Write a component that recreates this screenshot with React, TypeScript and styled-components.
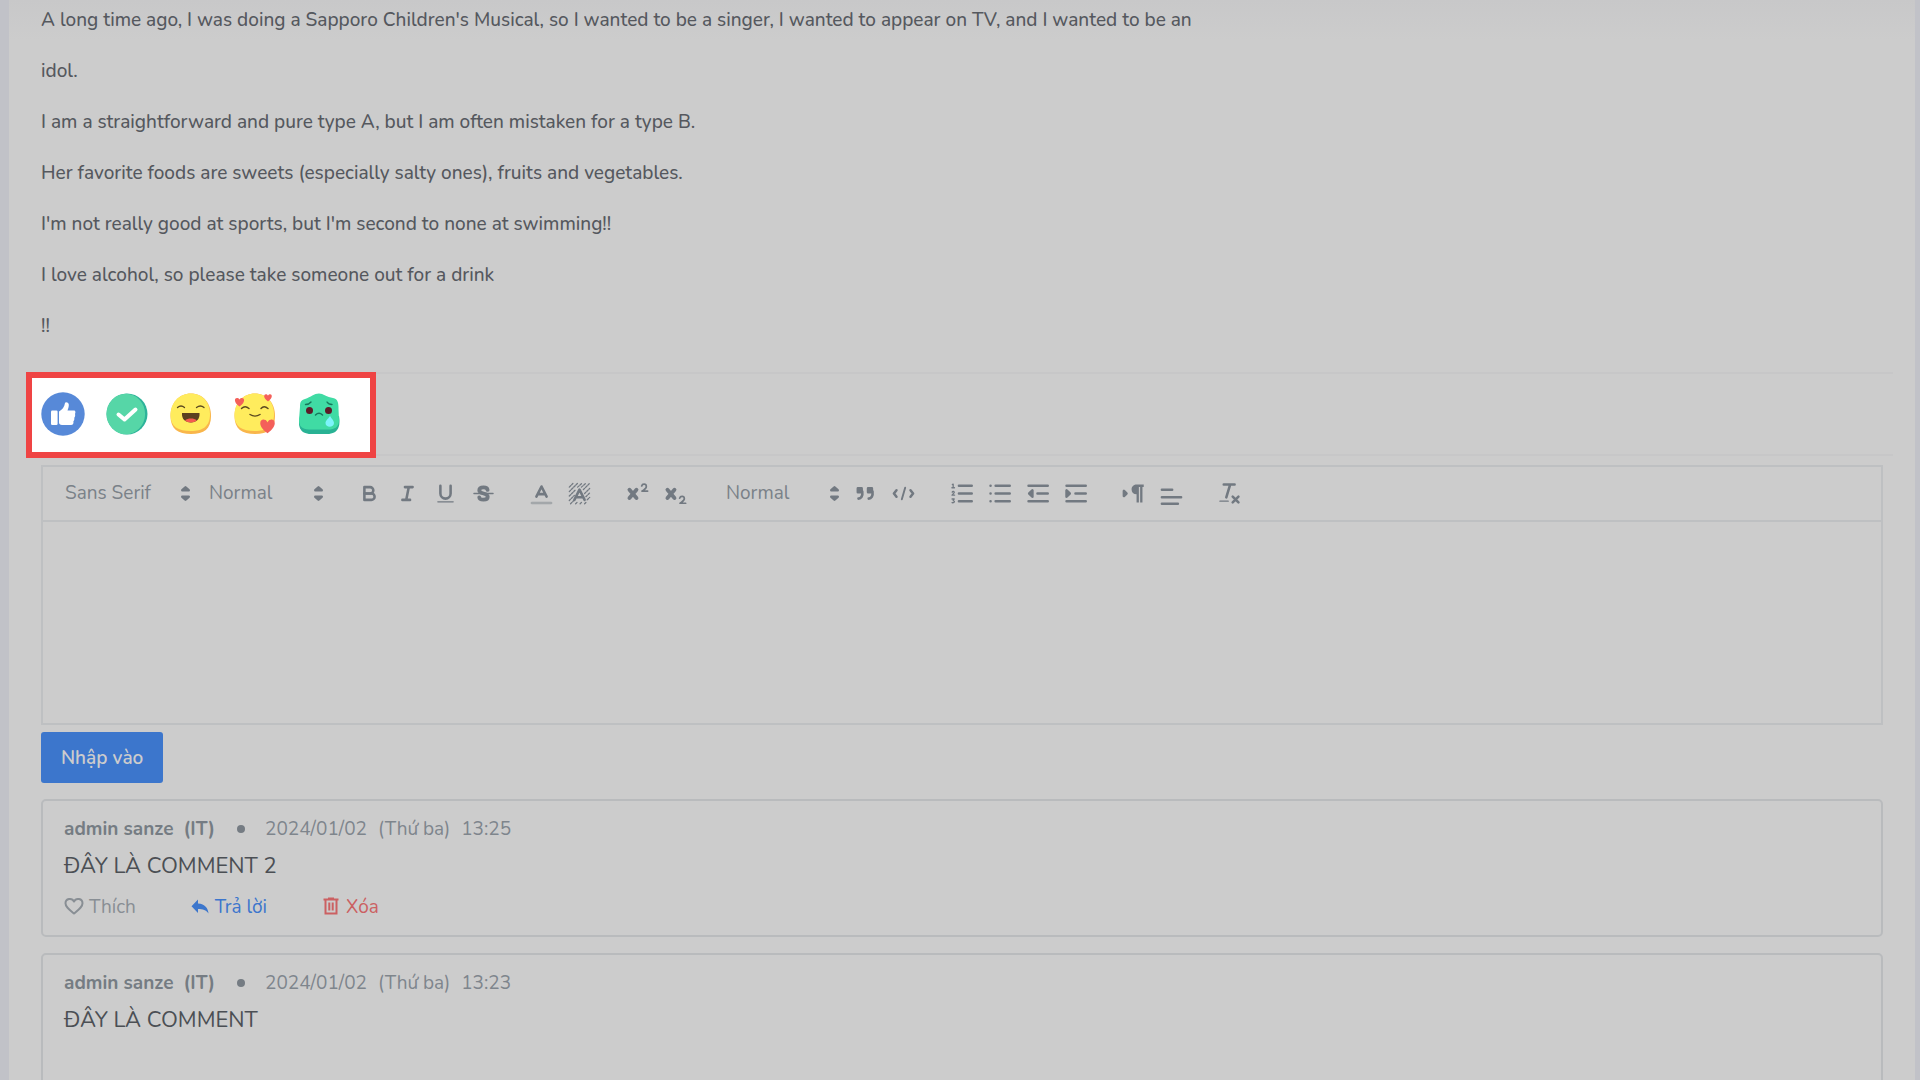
import React from "react";
import styled, { createGlobalStyle, css } from "styled-components";

const font = `Nunito, Lato, "Noto Sans", sans-serif`;

const GlobalStyle = createGlobalStyle`
  *, *::before, *::after { box-sizing: border-box; }
  body { margin: 0; background: #c1c2c8; font-family: ${font}; color: #55585e; }
  button, select, textarea { font-family: inherit; }
`;

const Page = styled.div`
  height: 100vh;
  overflow: hidden;
  padding: 0 5px 0 9px;
`;

const Panel = styled.main`
  display: flex;
  flex-direction: column;
  min-height: 100vh;
  padding: 8px 32px 0;
  background: linear-gradient(#c8c8c9, #cccccc 40px);
`;

const Article = styled.article`
  display: flex;
  flex-direction: column;
  gap: 27px;
  margin-bottom: 34px;
`;

const Paragraph = styled.p`
  margin: 0;
  font-size: 19px;
  font-weight: 500;
  line-height: 24px;
`;

const ReactionSection = styled.section`
  margin: 0 -10px 9px -15px;
  border-top: 2px solid #c7c7c8;
  border-bottom: 2px solid #c7c7c8;
`;

const ReactionBox = styled.div`
  display: flex;
  align-items: center;
  gap: 20px;
  width: 350px;
  height: 86px;
  margin: -2px 0 -4px;
  padding: 0 9px 2px;
  border: 6px solid #ef4444;
  background: #ffffff;
`;

const ReactionButton = styled.button`
  width: 44px;
  height: 44px;
  padding: 0;
  border: 0;
  background: none;
  svg { display: block; width: 44px; height: 44px; }
`;

const Editor = styled.section`
  border: 2px solid #bec0c2;
`;

const Toolbar = styled.div`
  display: flex;
  align-items: center;
  gap: 20px;
  height: 55px;
  padding: 0 10px;
  border-bottom: 2px solid #bec0c2;
  color: #727981;
`;

const Group = styled.div`
  display: flex;
  align-items: center;
`;

const Picker = styled.label<{ $width: number }>`
  display: flex;
  align-items: center;
  width: ${(p) => p.$width}px;
  margin-left: 7px;
  svg { flex: none; width: 23px; height: 23px; }
`;

const PickerSelect = styled.select`
  flex: 1;
  min-width: 0;
  height: 28px;
  padding: 0 0 2px 5px;
  border: 0;
  appearance: none;
  background: transparent;
  color: #7a8188;
  font-size: 19px;
`;

const ToolButton = styled.button`
  display: flex;
  justify-content: center;
  width: 38px;
  padding: 0;
  border: 0;
  background: none;
  color: inherit;
  svg { display: block; width: 23px; height: 23px; }
`;

const TextArea = styled.textarea`
  display: block;
  width: 100%;
  height: 201px;
  padding: 16px 20px;
  border: 0;
  outline: 0;
  resize: none;
  background: transparent;
  color: #55585e;
  font-size: 19px;
`;

const SubmitButton = styled.button`
  align-self: flex-start;
  height: 51px;
  margin: 7px 0 16px;
  padding: 0 20px;
  border: 0;
  border-radius: 3px;
  background: #3c76cc;
  color: #cccccc;
  font-size: 19px;
  font-weight: 600;
`;

const CommentList = styled.section`
  display: flex;
  flex-direction: column;
  gap: 16px;
`;

const Comment = styled.article`
  display: flex;
  flex-direction: column;
  flex: none;
  height: 138px;
  padding: 15px 21px 0;
  border: 2px solid #b9bbbd;
  border-radius: 5px;
`;

const CommentHeader = styled.header`
  display: flex;
  align-items: center;
  gap: 11px;
  color: #7e858c;
  font-size: 19px;
  line-height: 26px;
`;

const Author = styled.strong`
  display: flex;
  gap: 10px;
  color: #757c83;
`;

const Dot = styled.span`
  width: 8px;
  height: 8px;
  margin: 0 9px 0 11px;
  border-radius: 50%;
  background: #757c83;
`;

const CommentBody = styled.p`
  margin: 10px 0 14px;
  font-size: 22px;
  line-height: 28px;
  color: #4b4f54;
`;

const Actions = styled.div`
  display: flex;
  gap: 54px;
`;

const Action = styled.button<{ $color: string }>`
  display: flex;
  align-items: center;
  gap: 5px;
  padding: 0;
  border: 0;
  background: none;
  color: ${(p) => p.$color};
  font-size: 19px;
  line-height: 26px;
  svg { width: 20px; height: 20px; }
`;

const paragraphs = [
  "A long time ago, I was doing a Sapporo Children's Musical, so I wanted to be a singer, I wanted to appear on TV, and I wanted to be an",
  "idol.",
  "I am a straightforward and pure type A, but I am often mistaken for a type B.",
  "Her favorite foods are sweets (especially salty ones), fruits and vegetables.",
  "I'm not really good at sports, but I'm second to none at swimming!!",
  "I love alcohol, so please take someone out for a drink",
  "!!",
];

const heart = "M0 6 C-9 -1 -6 -7 -2.6 -6 C-1 -6 0 -4 0 -3.5 C0 -4 1 -6 2.6 -6 C6 -7 9 -1 0 6Z";
const faceBlob = "M22 1.5 C34 1.5 42 11 42 24 C42 37 35 42 22 42 C9 42 1.5 37 1.5 24 C1.5 11 10 1.5 22 1.5Z";
const faceFront = "M22 1.5 C33 1.5 41 10 41 22 C41 35 33 39 22 39 C9 39 1.5 35 1.5 23 C1.5 11 10 1.5 22 1.5Z";

const reactions = [
  {
    label: "Like",
    art: (
      <>
        <circle cx="22" cy="22" r="21.7" fill="#5789d8" />
        <rect x="10" y="18.5" width="6.6" height="14.5" rx="1.2" fill="#fff" />
        <path fill="#fff" d="M18 19.5 C21 18 23.5 15 24 11 C24.2 9.5 27.5 10 27.8 12.5 C28 14.5 27 17 26.5 18.5 H33 C34.8 18.5 34.6 21 34 22 C34.5 23.5 34 25 33.3 25.7 C33.6 27.5 33 28.7 32.4 29.3 C32.8 31.5 32 33 30 33 H21 C19 33 18 32 18 30.5Z" />
      </>
    ),
  },
  {
    label: "Done",
    art: (
      <>
        <circle cx="22" cy="22" r="20.5" fill="#2db39a" />
        <ellipse cx="20.8" cy="22" rx="19.3" ry="20.3" fill="#56d6a7" />
        <path d="M13.5 22.5 L19.5 27.5 L30.5 17.5" fill="none" stroke="#fff" strokeWidth="4" strokeLinecap="round" strokeLinejoin="round" />
      </>
    ),
  },
  {
    label: "Haha",
    art: (
      <>
        <path fill="#f9b64b" d={faceBlob} />
        <path fill="#ffec5d" d={faceFront} />
        <path d="M8.5 15.5 Q12 12.5 15.5 15.5 M27.5 15.5 Q31.5 12.5 35 15.5" fill="none" stroke="#5b481f" strokeWidth="1.3" strokeLinecap="round" />
        <path fill="#5b411f" d="M13 21 H30.5 C31 27 27.5 30.5 22 30.5 C16 30.5 12.6 27 13 21Z" />
        <path fill="#f45b4f" d="M16 28.3 C19 26 25 26 27.7 28.3 C25 31.3 18.5 31.3 16 28.3Z" />
      </>
    ),
  },
  {
    label: "Love",
    art: (
      <>
        <path fill="#f9b64b" d={faceBlob} />
        <path fill="#ffec5d" d={faceFront} />
        <path d="M8.5 16.5 Q12 13 16 16.5 M28 16.5 Q31 13 35 16.5 M17 22.5 Q22 25.7 27 22.5" fill="none" stroke="#5b481f" strokeWidth="1.4" strokeLinecap="round" />
        <g fill="#f4605a">
          <path transform="translate(6.5 10.3) scale(.77 .72)" d={heart} />
          <path transform="translate(35 5.8) scale(.64 .6)" d={heart} />
          <path transform="translate(34.5 34.5) scale(1.22 1.13)" d={heart} />
        </g>
      </>
    ),
  },
  {
    label: "Sad",
    art: (
      <>
        <path fill="#29b294" d="M3 24 L42 24 C43.5 33 42 42 30 42 H14 C2 42 .5 33 3 24Z" />
        <path fill="#40dba4" d="M22 1.5 C26 1.5 30 5 36 6 C41 7 41.5 11 41.5 17 L42 28 C42 35 38 37.5 31 37.5 H12 C5 37.5 2 34 2 28 L3 15 C3 10 4 8 8 7 C14 5 17 1.5 22 1.5Z" />
        <path d="M8.5 12.5 Q12 12.5 14 10 M30 10 Q31.5 12.5 35 12.5" fill="none" stroke="#15795c" strokeWidth="1.4" strokeLinecap="round" />
        <circle cx="12.5" cy="18.6" r="3.5" fill="#5d1b28" />
        <circle cx="31.5" cy="18.6" r="3.5" fill="#5d1b28" />
        <path d="M18.5 23 Q22 19.5 25.5 23" fill="none" stroke="#15795c" strokeWidth="1.5" strokeLinecap="round" />
        <path fill="#7df4fb" d="M33 23.5 C33.5 26 37 28 37 31 C37 36 28.5 36 28.5 31 C28.5 28 32.5 26 33 23.5Z" />
      </>
    ),
  },
];

const stroke = css`
  fill: none;
  stroke: currentColor;
  stroke-width: 2;
  stroke-linecap: round;
  stroke-linejoin: round;
`;

const ToolSvg = styled.svg`
  ${stroke}
  .thin { stroke-width: 1; }
  .fill { fill: currentColor; stroke: none; }
  .both { fill: currentColor; }
`;

const Icon = ({ children }: { children: React.ReactNode }) => (
  <ToolSvg viewBox="0 0 18 18" aria-hidden="true">{children}</ToolSvg>
);

const smallTwo =
  "M15.5 7H13.86a3.58 3.58 0 0 0 1.2-1.32A2.07 2.07 0 0 0 15.24 4.7 1.77 1.77 0 0 0 13.5 3a1.95 1.95 0 0 0-1.93 1.39.5.5 0 0 0 .3.61.6.6 0 0 0 .65-.24A.94.94 0 0 1 13.44 4a.75.75 0 0 1 .8.77c0 .7-.9 1.3-2.37 2.42A.5.5 0 0 0 12.1 8h3.4a.5.5 0 0 0 0-1Z";

type Tool = { label: string; icon: React.ReactNode };

const textTools: Tool[] = [
  { label: "Bold", icon: <><path d="M5 4H9.5A2.5 2.5 0 0 1 12 6.5 2.5 2.5 0 0 1 9.5 9H5Z" /><path d="M5 9H10.5A2.5 2.5 0 0 1 13 11.5 2.5 2.5 0 0 1 10.5 14H5Z" /></> },
  { label: "Italic", icon: <path d="M7 4H13M5 14H11M8 14L10 4" /> },
  { label: "Underline", icon: <><path d="M5 3V9A4 4 0 0 0 9 13 4 4 0 0 0 13 9V3" /><path className="thin" d="M3 15.5H15" /></> },
  { label: "Strike", icon: <><path d="M12.2 6.2C12 4.7 10.8 4.2 9 4.2 7 4.2 5.7 5 5.7 6.5 5.7 9.8 12.3 8.2 12.3 11.5 12.3 13.3 11 13.8 9 13.8 7 13.8 5.8 13.3 5.7 12" strokeWidth="3" /><path className="thin" d="M1.5 9H16.5" /></> },
];

const colorTools: Tool[] = [
  { label: "Text colour", icon: <><path opacity=".45" d="M1.5 16.5H16.5" /><path d="M5 11.5L9 3.5L13 11.5M6.5 9.5H11.5" /></> },
  { label: "Background colour", icon: <><path className="thin" strokeDasharray="1.5 1" d="M1 4L4 1M1 7.5L7.5 1M1 11L5.5 6.5M7.5 4L11 1M1 14.5L5 10.5M2 17L4.5 14.5M10.5 4L14 1M12 6L17 1M13 9L17 5M14 11.5L17 8.5M15 14L17 12M6 17L7.5 15.5M9.5 17L11 15.5M13 17L14 16" /><path d="M5 14L9 6L13 14M6.5 12H11.5" /></> },
];

const scriptTools: Tool[] = [
  { label: "Superscript", icon: <><path className="fill" d={smallTwo} transform="translate(-4 -3) scale(1.35)" /><path strokeWidth="3" d="M2.7 6L8.2 12.5M8.2 6L2.7 12.5" /></> },
  { label: "Subscript", icon: <><path className="fill" d={smallTwo} transform="translate(-4 6.5) scale(1.35)" /><path strokeWidth="3" d="M2.7 6L8.2 12.5M8.2 6L2.7 12.5" /></> },
];

const blockTools: Tool[] = [
  { label: "Quote", icon: <><rect className="both" x="3" y="5" width="3" height="3" /><rect className="both" x="11" y="5" width="3" height="3" /><path d="M6.5 7.5C7 11 5.5 13 3.5 13M14.5 7.5C15 11 13.5 13 11.5 13" /></> },
  { label: "Code", icon: <><path d="M3.5 6.5L1.5 9L3.5 11.5M14.5 6.5L16.5 9L14.5 11.5" /><path d="M10.3 4.5L7.7 13.5" strokeWidth="1.5" /></> },
];

const listTools: Tool[] = [
  { label: "Ordered list", icon: <><path d="M7 3H17M7 9H17M7 15H17" /><path className="thin" d="M2.5 4.5V1.6L1.8 2M1.5 4.5H3.5M1.7 8C2 7 3.5 7.2 3.3 8.3L1.6 10.3H3.6M1.6 13.3H3.3L2.5 14.6C4 14.7 3.8 16.5 1.6 16.2" /></> },
  { label: "Bullet list", icon: <path d="M6 3H17M6 9H17M6 15H17M2 3V3M2 9V9M2 15V15" /> },
  { label: "Decrease indent", icon: <><path d="M2 3H17M2 15H17M9 9H17" /><path className="both" d="M5 6.5V11.5L2.5 9Z" /></> },
  { label: "Increase indent", icon: <><path d="M2 3H17M2 15H17M9 9H17" /><path className="both" d="M2 6.5V11.5L4.5 9Z" /></> },
];

const alignTools: Tool[] = [
  { label: "Text direction", icon: <><path className="both" d="M1.5 7V11L3.5 9Z" /><path className="fill" d="M11.5 2H17V4H16V16H14.2V4H13.2V16H11.4V9.5C9 9.5 7.5 8 7.5 5.8 7.5 3.500 9.5 2 11.5 2Z" /></> },
  { label: "Align", icon: <path d="M1.500 6H9.500M1.500 12H16.500M1.500 17H14" /> },
];

const clearTools: Tool[] = [
  { label: "Clear formatting", icon: <><path d="M4.5 2H13M9.500 2L6.500 12M11.500 11.500L16 16M16 11.500L11.500 16" /><path className="thin" d="M1.5 15H8" /></> },
];

const Tools = ({ tools }: { tools: Tool[] }) => (
  <>
    {tools.map((t) => (
      <ToolButton key={t.label} type="button" aria-label={t.label}><Icon>{t.icon}</Icon></ToolButton>
    ))}
  </>
);

const Dropdown = ({ label, value, width }: { label: string; value: string; width: number }) => (
  <Picker $width={width}>
    <PickerSelect aria-label={label} defaultValue={value}><option>{value}</option></PickerSelect>
    <Icon>
      <path className="both" d="M6.5 6.5L9 4.2L11.5 6.5ZM6.5 11.5L9 13.8L11.5 11.5Z" />
    </Icon>
  </Picker>
);

const comments = [
  { time: "13:25", text: "ĐÂY LÀ COMMENT 2", actions: true },
  { time: "13:23", text: "ĐÂY LÀ COMMENT", actions: false },
];

export default function App() {
  return (
    <>
      <GlobalStyle />
      <Page>
        <Panel>
          <Article>
            {paragraphs.map((p) => <Paragraph key={p}>{p}</Paragraph>)}
          </Article>
          <ReactionSection>
            <ReactionBox>
              {reactions.map((r) => (
                <ReactionButton key={r.label} type="button" aria-label={r.label}>
                  <svg viewBox="0 0 44 44" aria-hidden="true">{r.art}</svg>
                </ReactionButton>
              ))}
            </ReactionBox>
          </ReactionSection>
          <Editor>
            <Toolbar>
              <Group>
                <Dropdown label="Font" value="Sans Serif" width={137} />
                <Dropdown label="Size" value="Normal" width={126} />
              </Group>
              <Group><Tools tools={textTools} /></Group>
              <Group><Tools tools={colorTools} /></Group>
              <Group><Tools tools={scriptTools} /></Group>
              <Group>
                <Dropdown label="Heading" value="Normal" width={125} />
                <Tools tools={blockTools} />
              </Group>
              <Group><Tools tools={listTools} /></Group>
              <Group><Tools tools={alignTools} /></Group>
              <Group><Tools tools={clearTools} /></Group>
            </Toolbar>
            <TextArea aria-label="Comment" />
          </Editor>
          <SubmitButton type="button">Nhập vào</SubmitButton>
          <CommentList>
            {comments.map((c) => (
              <Comment key={c.time}>
                <CommentHeader>
                  <Author><span>admin sanze</span><span>(IT)</span></Author>
                  <Dot />
                  <span>2024/01/02</span>
                  <span>(Thứ ba)</span>
                  <span>{c.time}</span>
                </CommentHeader>
                <CommentBody>{c.text}</CommentBody>
                {c.actions && (
                  <Actions>
                    <Action type="button" $color="#888e94">
                      <svg viewBox="0 0 20 20" fill="none" stroke="currentColor" strokeWidth="2" strokeLinejoin="round" aria-hidden="true">
                        <path d="M10 16.5C5 12.5 1.5 10 1.5 6.2 1.5 1.5 8 .5 10 4.5 12 .5 18.5 1.5 18.5 6.2 18.5 10 15 12.5 10 16.5Z" />
                      </svg>
                      Thích
                    </Action>
                    <Action type="button" $color="#3c76cc">
                      <svg viewBox="0 0 20 20" fill="currentColor" aria-hidden="true">
                        <path d="M8 2.5V6.5C15 7 18 11 18.5 16.5C16 13 13 12 8 12V16L1.5 9.3Z" />
                      </svg>
                      Trả lời
                    </Action>
                    <Action type="button" $color="#cb6062">
                      <svg viewBox="0 0 20 20" fill="none" stroke="currentColor" strokeWidth="2" aria-hidden="true">
                        <path d="M2.5 2.5H17.5M7 1.5H13M4.5 3V16.5H15.5V3M8.3 5.5V13.5M11.7 5.5V13.5" />
                      </svg>
                      Xóa
                    </Action>
                  </Actions>
                )}
              </Comment>
            ))}
          </CommentList>
        </Panel>
      </Page>
    </>
  );
}
